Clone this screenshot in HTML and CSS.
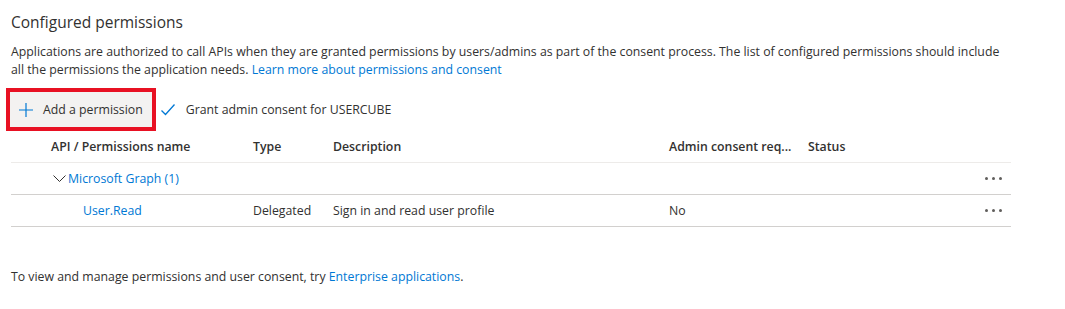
FILE: index.html
```html
<!DOCTYPE html>
<html lang="en">
  <head>
    <meta charset="UTF-8" />
    <title>API permissions</title>
    <link rel="stylesheet" href="styles.css">
  </head>
  <body>
    <div class="section">
      <h2>Configured permissions</h2>
      <p class="intro">
        Applications are authorized to call APIs when they are granted permissions by users/admins as part of the consent process. The list of configured permissions should include<br>
        all the permissions the application needs. <a href="#">Learn more about permissions and consent</a>
      </p>

      <!-- toolbar -->
      <div class="toolbar">
        <div class="highlight">
          <button class="cmd add">
            <svg width="16" height="16" viewBox="0 0 16 16"><path d="M8 1v14M1 8h14" stroke="#0078d4" stroke-width="1.2" fill="none"/></svg>
            Add a permission
          </button>
        </div>
        <button class="cmd grant">
          <svg width="16" height="16" viewBox="0 0 16 16"><path d="M1.5 8.5l4 4 9-10" stroke="#0078d4" stroke-width="1.3" fill="none"/></svg>
          Grant admin consent for USERCUBE
        </button>
      </div>

      <!-- permissions table -->
      <div class="grid">
        <div class="row head">
          <div></div>
          <div>API / Permissions name</div>
          <div>Type</div>
          <div>Description</div>
          <div>Admin consent req...</div>
          <div>Status</div>
          <div></div>
        </div>
        <div class="row">
          <div></div>
          <div class="group">
            <svg class="chev" width="13" height="8" viewBox="0 0 13 8"><path d="M0.5 0.5l6 6 6-6" stroke="#323130" stroke-width="1" fill="none"/></svg>
            <a href="#">Microsoft Graph (1)</a>
          </div>
          <div></div>
          <div></div>
          <div></div>
          <div></div>
          <div class="more"><span></span><span></span><span></span></div>
        </div>
        <div class="row">
          <div></div>
          <div class="perm"><a href="#">User.Read</a></div>
          <div>Delegated</div>
          <div>Sign in and read user profile</div>
          <div>No</div>
          <div></div>
          <div class="more"><span></span><span></span><span></span></div>
        </div>
      </div>

      <p class="footer">To view and manage permissions and user consent, try <a href="#">Enterprise applications</a>.</p>
    </div>
  </body>
</html>
```

FILE: styles.css
```css
* {
  margin: 0;
  padding: 0;
  box-sizing: border-box;
}
body {
  background: #ffffff;
  font-family: "Open Sans", "Noto Sans", sans-serif;
  font-size: 12.3px;
  color: #323130;
}
a {
  color: #0078d4;
  text-decoration: none;
}
.section {
  padding: 10px 11px 0 11px;
  width: 1022px;
}
h2 {
  font-size: 15.5px;
  font-weight: 400;
  line-height: 24px;
  color: #323130;
}
.intro {
  margin-top: 9px;
  line-height: 18px;
}
.toolbar {
  margin-top: 9px;
  margin-left: -5px;
  display: flex;
  align-items: center;
}
.highlight {
  border: 4px solid #e81123;
}
.cmd {
  display: flex;
  align-items: center;
  gap: 8px;
  border: 0;
  background: none;
  font-family: inherit;
  font-size: 12.3px;
  color: #323130;
  cursor: pointer;
}
.add {
  background: #f3f2f1;
  height: 35px;
  padding: 0 9px 0 8px;
  gap: 9px;
}
.grant {
  padding-left: 4px;
  gap: 10px;
}
.grid {
  margin-top: 0;
  width: 1000px;
}
.row {
  display: grid;
  grid-template-columns: 40px 202px 80px 336px 139px 1fr 40px;
  height: 32px;
  align-items: center;
  border-bottom: 1px solid #d2d0ce;
}
.row.head {
  font-weight: 600;
  border-bottom-color: #edebe9;
}
.group {
  display: flex;
  align-items: center;
  gap: 2px;
  margin-left: 2px;
}
.perm {
  padding-left: 32px;
}
.more {
  display: flex;
  gap: 4px;
  padding-left: 14px;
}
.more span {
  width: 3px;
  height: 3px;
  border-radius: 50%;
  background: #605e5c;
}
.footer {
  margin-top: 41px;
}
```
